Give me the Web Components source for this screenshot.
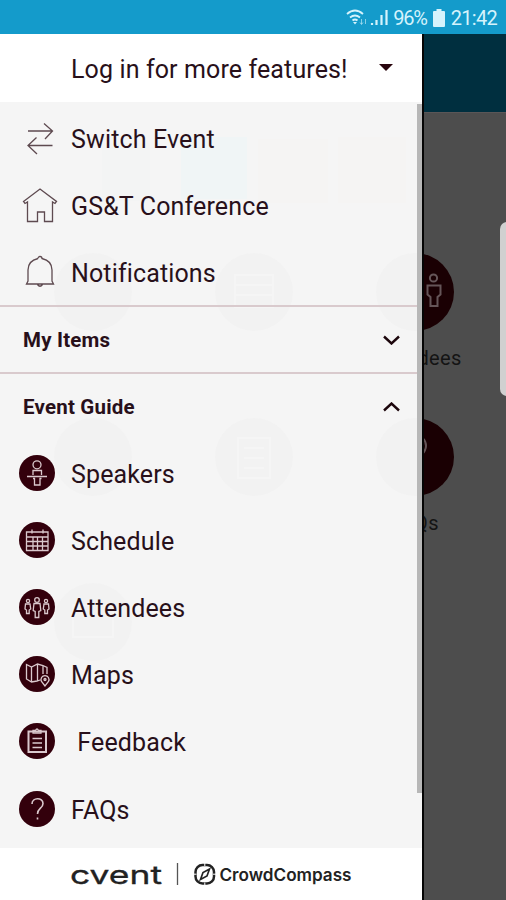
<!DOCTYPE html>
<html lang="en">
<head>
<meta charset="utf-8">
<title>GS&amp;T Conference</title>
<style>
  body {
    margin: 0;
    width: 506px;
    height: 900px;
    overflow: hidden;
    font-family: Roboto, "Liberation Sans", sans-serif;
    color: #28101a;
  }
</style>
</head>
<body>
<event-app></event-app>

<script>
const define = (name, html, setup) => {
  const template = document.createElement('template');
  template.innerHTML = html;

  customElements.define(name, class extends HTMLElement {
    constructor() {
      super();
      this.attachShadow({mode: 'open'});
      this.shadowRoot.appendChild(template.content.cloneNode(true));
    }

    connectedCallback() {
      if (setup) {
        setup(this, this.shadowRoot);
      }
    }
  });
};

// line icons, drawn on a 36x36 box
const icons = {
  swap: '<path d="M9 10H33.500M25 2.500l8.500 7.500-7.500 8M33.500 24.500H9M17.500 16.500l-8.500 8 9 8.500"/>',
  home: '<path d="M4.500 13.500 21 1l16.500 12.500-1.500 2-2.500-1.500V33.500h-8v-9.500h-7v9.500h-10V14l-2.500 1.500z"/>',
  bell: '<path d="M19 3.500a2 2 0 0 1 4 0c6.500 1.500 10 6 10 11.500V26l1.500 3H7.500l1.500-3V15c0-5.500 3.500-10 10-11.500M18.500 29.500q2.500 3.500 5 0"/>',
  speaker: '<circle cx="18" cy="9.800" r="4"/><path d="M14 20v-4.500h8.500V20M14 23.500h1.500V30h5.500v-6.500h1.500M8 21.500h20"/>',
  schedule: '<path d="M7.500 10h21.500v18.500H7.500zM7.500 15H29M7.500 19.500H29M7.500 24H29M14 15v13.500M18.500 15v13.500M23.500 15v13.500M13 7.500v4M24 7.500v4"/>',
  attendees: '<circle cx="18" cy="11" r="2.300"/><path d="M15 14.500h6l.8 7-2 1v6h-3.600v-6l-2-1z"/><circle cx="9" cy="12" r="1.600"/><path d="M6.500 15h4.500l.7 5-1.500 1v3.500H7.500V21L6 20z"/><circle cx="27" cy="12" r="1.600"/><path d="M25 15h4.500l.5 5-1.500 1v3.500h-2.700V21l-1.500-1z"/>',
  maps: '<path d="M21 24l-3 1-5.500 1L7.500 23V8.500L12.500 11l6-3L24 9.500l4 2V18M12.500 11v15M18.500 8v16.500M24 9.500V18"/><path d="M26 30l-3.500-4.500a4 4 0 1 1 7 0z"/><circle cx="26" cy="23.500" r="1"/>',
  feedback: '<path stroke-width="2" d="M9.500 8.500h17.500v20.500H9.500z"/><path d="M14 10V7.500h2.500q1.500-3 3 0H22V10zM13.500 15.500h9.500M13.500 20h9.500M13.500 24.500h9.500"/>',
  faqs: '<path stroke-width="1.600" d="M13 13c0-7 11-7 11-.5 0 5-5.500 4.500-5.500 10.500M18.500 26.500v2"/>'
};

define('app-icon', /* html */`
  <style>
    :host { display: block; width: 36px; height: 36px; flex: none; color: #5e4a50; white-space: normal; }
    :host([badge]) { background: #33000c; border-radius: 50%; color: #dac8cd; }
    svg { display: block; overflow: visible; fill: none; stroke: currentColor; stroke-width: 1.300; }
  </style>
  <svg width="36" height="36" viewBox="0 0 36 36"></svg>
`, (el, root) => {
  root.querySelector('svg').innerHTML = icons[el.getAttribute('name')];
});

define('status-bar', /* html */`
  <style>
    :host {
      display: flex; align-items: center; justify-content: flex-end;
      height: 34px; padding: 2px 9px 0 0; box-sizing: border-box;
      background: #149bcb; color: #d5f3fc; font-size: 20px;
    }
    svg { display: block; }
    .level { margin: 0 6px 0 5px; letter-spacing: -1.200px; }
    .time { margin-left: 6px; letter-spacing: -.7px; }
  </style>
  <svg width="43" height="18" viewBox="0 0 43 18" fill="none" stroke="currentColor" stroke-width="1.800">
    <path d="M2 5q8-7 16 0M5 8.500q5-4 10 0M7.500 11.500q2.500-2 5 0"/>
    <path d="M8 13h4l-2 2.500z" fill="currentColor" stroke="none"/>
    <path d="M16.500 10v5m-1.500-1.500l1.500 2 1.500-2M20.500 15v-5" stroke-width="1" opacity=".6"/>
    <path d="M27 16v-2M31.500 16v-5M36.500 16V6M41.500 16V1" stroke-width="2.200"/>
  </svg>
  <span class="level">96%</span>
  <svg width="12" height="18" viewBox="0 0 12 18" fill="currentColor"><path d="M3.500 0h5v2H11q1 0 1 1v14q0 1-1 1H1q-1 0-1-1V3q0-1 1-1h2.500z"/></svg>
  <span class="time">21:42</span>
`);

define('guide-tile', /* html */`
  <style>
    :host { display: flex; flex-direction: column; align-items: center; width: 120px; height: 165px; }
    svg { display: block; }
    span { margin-top: 15px; font-size: 20px; line-height: 24px; color: #141414; letter-spacing: .3px; }
  </style>
  <svg width="78" height="78" viewBox="0 0 78 78" fill="none" stroke="#655558" stroke-width="2">
    <circle cx="39" cy="39" r="39" fill="#1a0003" stroke="none"/>
    <g class="art"></g>
  </svg>
  <span><slot></slot></span>
`, (el, root) => {
  root.querySelector('.art').innerHTML = el.getAttribute('kind') === 'people'
    ? '<circle cx="57.500" cy="25" r="3.600"/><path d="M51.500 32.500h13v9l-3 2.500v9h-7v-9l-3-2.500z"/>'
    : '<path d="M31 28c0-15 19-13 19 0 0 9-10 10-10 21M40 55v4"/>';
});

define('event-page', /* html */`
  <style>
    :host { display: block; background: #4d4d4d; overflow: hidden; }
    header { height: 79px; background: #002f3f; border-bottom: 1px solid #5a5657; box-sizing: border-box; }
    main { display: flex; flex-direction: column; align-items: flex-end; padding: 140px 31px 0 0; }
  </style>
  <header></header>
  <main>
    <guide-tile kind="people">Attendees</guide-tile>
    <guide-tile kind="question">FAQs</guide-tile>
  </main>
`);

define('menu-row', /* html */`
  <style>
    :host {
      display: flex; align-items: center; height: 67.100px; box-sizing: border-box;
      padding: 3px 0 0 19px; font-size: 25px; letter-spacing: .14px; white-space: pre;
    }
    ::slotted(app-icon) { margin: -1px 16px 0 0; }
    ::slotted(app-icon[badge]) { margin-top: -3px; }
  </style><slot></slot>`);

define('menu-section', /* html */`
  <style>
    :host {
      display: flex; align-items: center; justify-content: space-between; height: 67.100px;
      box-sizing: border-box; padding: 0 22px 0 23px; border-top: 2px solid #d9cacd;
      font-size: 20.500px; font-weight: 700; letter-spacing: .2px;
    }
    svg { display: block; fill: none; stroke: #1c060c; stroke-width: 2.400; }
    :host([open]) svg { transform: scaleY(-1); }
  </style>
  <slot></slot>
  <svg width="17" height="10" viewBox="0 0 17 10"><path d="M1 1.500l7.500 7 7.500-7"/></svg>
`);

define('page-ghost', /* html */`
  <style>
    :host { position: absolute; inset: 0; }
    svg { display: block; }
  </style>
  <svg width="422" height="746" viewBox="0 102 422 746" fill="#f2f2f2">
    <g>
      <path fill="#f3f4f4" d="M102 143h48v58h-48z"/>
      <path fill="#f0f5f6" d="M181 137h66v62h-66z"/>
      <path fill="#f5f4f3" d="M258 139h70v64h-70zM338 137h68v66h-68z"/>
    </g>
    <circle cx="93" cy="292" r="39"/><circle cx="254" cy="292" r="39"/><circle cx="415" cy="292" r="39"/>
    <circle cx="93" cy="457" r="39"/><circle cx="254" cy="457" r="39"/><circle cx="415" cy="457" r="39"/>
    <circle cx="93" cy="622" r="39"/>
    <g fill="none" stroke="#f5f5f5" stroke-width="2">
      <path d="M235 275h38v32h-38zM235 285h38M235 295h38M238 438h32v40h-32zM244 448h20M244 458h20M244 468h20"/>
      <path d="M73 605h40v32H73z"/>
    </g>
  </svg>
`);

define('brand-footer', /* html */`
  <style>
    :host { display: block; height: 52px; background: #fff; }
    svg { display: block; }
    text { font-family: Inter, "Liberation Sans", sans-serif; fill: #222; }
  </style>
  <svg width="422" height="52" viewBox="0 0 422 52">
    <text x="70" y="35.500" font-size="25.500" font-weight="400" stroke="#222" stroke-width=".3" textLength="92" lengthAdjust="spacingAndGlyphs">cvent</text>
    <path d="M177.500 15v22" stroke="#555" stroke-width="1.300"/>
    <g fill="none" stroke="#222">
      <rect x="195.500" y="17" width="18.500" height="18.500" rx="7" stroke-width="2.500"/>
      <path d="M209.500 21l-2.500 7-6.500 3.500 2.500-7z" stroke-width="1.700"/>
      <path d="M204.800 15v3M204.800 34.500v3M193.500 26.200h3M213 26.200h3" stroke="#fff" stroke-width="1"/>
    </g>
    <text x="219.500" y="32.500" font-size="17" font-weight="600" textLength="132" lengthAdjust="spacingAndGlyphs">CrowdCompass</text>
  </svg>
`);

define('side-drawer', /* html */`
  <style>
    :host { display: flex; flex-direction: column; background: #fff; border-right: 2px solid #050505; }
    header {
      display: flex; align-items: center; justify-content: space-between; height: 68px;
      padding: 2px 29px 0 71px; box-sizing: border-box; font-size: 25px; letter-spacing: .12px;
    }
    header i { margin-bottom: 3px; border: 7px solid transparent; border-top-color: #28040d; border-bottom: 0; }
    nav { position: relative; height: 746px; box-sizing: border-box; padding-top: 2.100px; background: #f5f5f5; }
    .rows { position: relative; }
    .thumb { position: absolute; top: 2px; right: 0; width: 5px; height: 689px; background: #b7b7b7; }
  </style>
  <header><span>Log in for more features!</span><i></i></header>
  <nav>
    <page-ghost></page-ghost>
    <div class="rows">
      <menu-row><app-icon name="swap"></app-icon>Switch Event</menu-row>
      <menu-row><app-icon name="home"></app-icon>GS&amp;T Conference</menu-row>
      <menu-row><app-icon name="bell"></app-icon>Notifications</menu-row>
      <menu-section>My Items</menu-section>
      <menu-section open>Event Guide</menu-section>
      <menu-row><app-icon badge name="speaker"></app-icon>Speakers</menu-row>
      <menu-row><app-icon badge name="schedule"></app-icon>Schedule</menu-row>
      <menu-row><app-icon badge name="attendees"></app-icon>Attendees</menu-row>
      <menu-row><app-icon badge name="maps"></app-icon>Maps</menu-row>
      <menu-row><app-icon badge name="feedback"></app-icon> Feedback</menu-row>
      <menu-row><app-icon badge name="faqs"></app-icon>FAQs</menu-row>
    </div>
    <div class="thumb"></div>
  </nav>
  <brand-footer></brand-footer>
`);

define('event-app', /* html */`
  <style>
    :host { display: grid; grid-template-rows: 34px 866px; width: 506px; height: 900px; overflow: hidden; }
    .screen { position: relative; display: grid; }
    side-drawer { position: absolute; top: 0; bottom: 0; left: 0; width: 422px; }
    /* edge panel handle on the right side of the phone */
    .handle { position: absolute; top: 188px; right: -8px; width: 14px; height: 174px; border-radius: 7px; background: #d0d0d0; }
  </style>
  <status-bar></status-bar>
  <div class="screen">
    <event-page></event-page>
    <side-drawer></side-drawer>
    <div class="handle"></div>
  </div>
`);
</script>
</body>
</html>
